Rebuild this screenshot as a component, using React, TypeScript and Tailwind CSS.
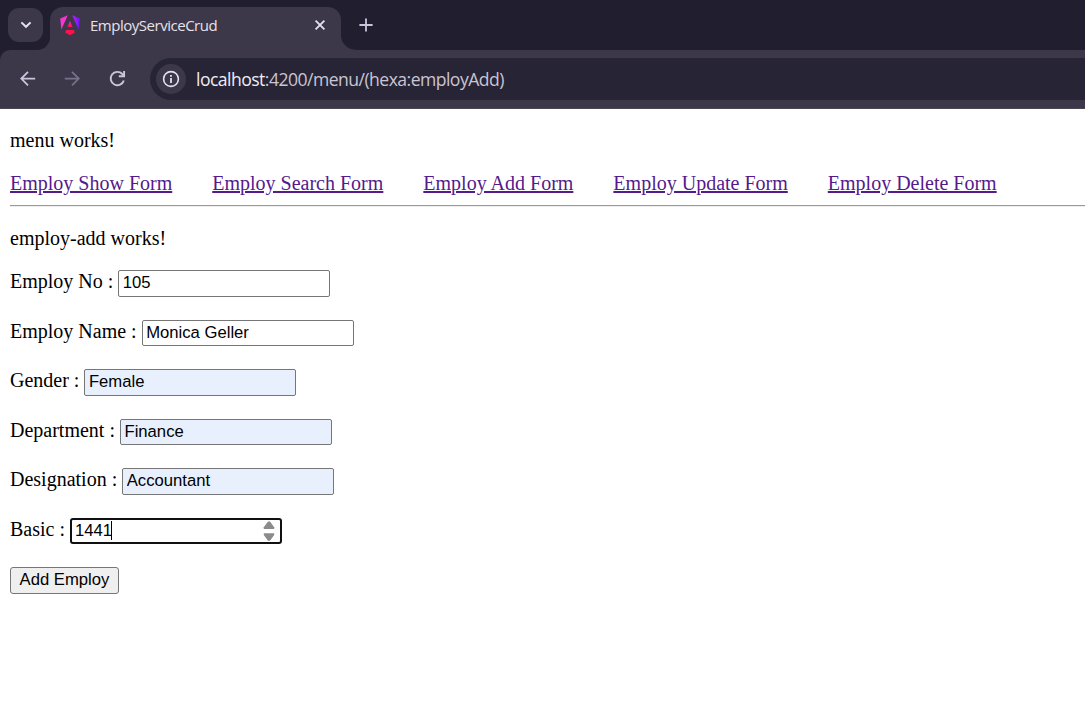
import React from "react";

const links = [
  "Employ Show Form",
  "Employ Search Form",
  "Employ Add Form",
  "Employ Update Form",
  "Employ Delete Form",
];

const fields = [
  { label: "Employ No :", value: "105", filled: false },
  { label: "Employ Name :", value: "Monica Geller", filled: false },
  { label: "Gender :", value: "Female", filled: true },
  { label: "Department :", value: "Finance", filled: true },
  { label: "Designation :", value: "Accountant", filled: true },
];

function AngularLogo() {
  return (
    <svg width="20" height="21" viewBox="0 0 20 21" className="block">
      <defs>
        <linearGradient id="ng" x1="0" y1="0.3" x2="1" y2="0.3">
          <stop offset="0" stopColor="#c023e8" />
          <stop offset="1" stopColor="#6a14ff" />
        </linearGradient>
        <linearGradient id="ngLow" x1="0" y1="0" x2="0" y2="1">
          <stop offset="0" stopColor="#f52cc0" />
          <stop offset="1" stopColor="#ff0f4c" />
        </linearGradient>
      </defs>
      <path d="M7.8 0.2 L0.2 3.5 L1.4 14.4 Z" fill="#f735cf" />
      <path d="M12.2 0.2 L19.8 3.5 L18.6 14.4 Z" fill="url(#ng)" />
      <path d="M10 6 L12.5 12 H7.5 Z" fill="url(#ngLow)" />
      <path d="M6.1 15.1 H13.9 L14.8 17.4 L10 20.3 L5.2 17.4 Z" fill="#ff104f" />
    </svg>
  );
}

function TabStrip() {
  return (
    <div className="flex h-[50px] bg-[#211e2f]">
      <div className="mt-2 ml-2 flex h-[34px] w-[35px] shrink-0 items-center justify-center rounded-[11px] bg-[#3c384a]">
        <svg width="12" height="8" viewBox="0 0 12 8" fill="none" stroke="#e6e1f0" strokeWidth="2">
          <path d="M1.4 1.4 L6 5.8 L10.6 1.4" />
        </svg>
      </div>
      <svg width="13" height="13" viewBox="0 0 13 13" className="-ml-[6px] shrink-0 self-end">
        <path d="M13 0 A13 13 0 0 1 0 13 H13 Z" fill="#3c384a" />
      </svg>
      <div className="mt-[7px] flex h-[43px] w-[290.5px] shrink-0 items-start rounded-t-[13px] bg-[#3c384a]">
        <div className="mt-[7.5px] ml-[10px]">
          <AngularLogo />
        </div>
        <span className="mt-[7px] ml-[10px] w-[127px] text-[15px] leading-[22px] tracking-[-0.48px] whitespace-nowrap text-[#e6e1e9]" style={{ fontFamily: '"Open Sans", sans-serif' }}>
          EmployServiceCrud
        </span>
        <svg width="12" height="12" viewBox="0 0 12 12" fill="none" stroke="#e6e1f0" strokeWidth="1.8" className="mt-[12px] ml-[97px]">
          <path d="M1.6 1.6 L10.4 10.4 M10.4 1.6 L1.6 10.4" />
        </svg>
      </div>
      <svg width="15" height="15" viewBox="0 0 15 15" className="shrink-0 self-end">
        <path d="M0 0 A15 15 0 0 0 15 15 H0 Z" fill="#3c384a" />
      </svg>
      <svg width="14" height="14" viewBox="0 0 14 14" fill="none" stroke="#cbc5dc" strokeWidth="1.8" className="mt-[18px] ml-[3.5px]">
        <path d="M7 0.4 V13.6 M0.4 7 H13.6" />
      </svg>
    </div>
  );
}

function Toolbar() {
  return (
    <div className="bg-[#211e2f]">
      <div className="flex h-[59px] items-start rounded-tl-[10px] border-b border-[#4b4850] bg-[#3c384a] pt-2">
        <svg width="16" height="16" viewBox="0 0 16 16" fill="none" stroke="#cbc5dc" strokeWidth="1.8" className="mt-[13px] ml-5 shrink-0">
          <path d="M15.2 7.6 H1.5 M8 0.8 L1.3 7.6 L8 14.4" />
        </svg>
        <svg width="16" height="16" viewBox="0 0 16 16" fill="none" stroke="#77728a" strokeWidth="1.8" className="mt-[13px] ml-[28px] shrink-0">
          <path d="M0.8 7.6 H14.5 M8 0.8 L14.7 7.6 L8 14.4" />
        </svg>
        <svg width="17" height="17" viewBox="0 0 17 17" fill="none" stroke="#cbc5dc" strokeWidth="1.9" className="mt-[12px] ml-[29px] shrink-0">
          <path d="M14.8 10.4 A6.7 6.7 0 1 1 13.3 4 L15 5.7" />
          <path d="M15.1 1 V6.3 H9.8" />
        </svg>
        <div className="ml-[24px] flex h-[42px] grow items-center rounded-l-[21px] bg-[#272436]">
          <div className="ml-[6px] flex size-[30px] items-center justify-center rounded-full bg-[#3c384a]">
            <svg width="18" height="18" viewBox="0 0 18 18" fill="none">
              <circle cx="9" cy="9" r="7.4" stroke="#e6e1f0" strokeWidth="1.6" />
              <path d="M9 8 V13" stroke="#e6e1f0" strokeWidth="1.8" />
              <path d="M9 4.9 V6.7" stroke="#e6e1f0" strokeWidth="1.8" />
            </svg>
          </div>
          <span className="ml-[10px] text-[17.6px] leading-[26px] tracking-[-0.54px] whitespace-nowrap text-[#c9c4d2]" style={{ fontFamily: '"Open Sans", sans-serif' }}>
            <span className="text-[#f0ecf5]">localhost</span>:4200/menu/(hexa:employAdd)
          </span>
        </div>
      </div>
    </div>
  );
}

export default function App() {
  return (
    <div className="flex h-[709px] w-[1085px] flex-col overflow-hidden bg-white">
      <TabStrip />
      <Toolbar />
      <main className="pl-[10px] text-[20px] leading-[23px] text-black" style={{ fontFamily: '"Liberation Serif", serif' }}>
        <p className="mt-5">menu works!</p>
        <nav className="mt-5 flex gap-[40px]">
          {links.map((link) => (
            <a key={link} href="#" className="whitespace-nowrap text-[#551a8b] underline">
              {link}
            </a>
          ))}
        </nav>
        <hr className="mt-[10px] h-[2px] border-t border-b border-t-[#9a9a9a] border-b-[#eeeeee]" />
        <p className="mt-5">employ-add works!</p>
        <form className="mt-5 flex flex-col gap-[23px]">
          {fields.map((field) => (
            <label key={field.label} className="flex h-[26.5px] gap-[5px]">
              <span className="whitespace-nowrap">{field.label}</span>
              <input
                readOnly
                value={field.value}
                className={
                  "h-[26.5px] w-[212px] rounded-[2px] border border-[#767676] pr-1 pb-[0.5px] pl-[3.5px] text-[16.67px] leading-[19px] " +
                  (field.filled ? "bg-[#e8f0fe]" : "bg-white")
                }
                style={{ fontFamily: '"Liberation Sans", sans-serif' }}
              />
            </label>
          ))}
          <div className="flex h-[26.5px] gap-[5px]">
            <span className="whitespace-nowrap">Basic :</span>
            <div
              className="flex h-[26.5px] w-[212px] rounded-[3px] border-2 border-[#101010] pr-[5.5px] pl-[3px] text-[16.67px] leading-[22px]"
              style={{ fontFamily: '"Liberation Sans", sans-serif' }}
            >
              <span className="w-[36px]">1441</span>
              <span className="mt-[1px] h-[19px] w-px bg-black" />
              <svg width="12" height="20" viewBox="0 0 12 20" fill="#8b8b8b" className="mt-[1px] ml-auto">
                <path d="M5 0.5 H7 L11.2 6.2 V8 H0.8 V6.2 Z" />
                <path d="M5 19.8 H7 L11.2 14 V12.2 H0.8 V14 Z" />
              </svg>
            </div>
          </div>
          <button
            type="button"
            className="h-[26.5px] w-[109px] rounded-[3px] border border-[#767676] bg-[#efefef] pb-[1px] text-[16.67px] leading-[19px] whitespace-nowrap"
            style={{ fontFamily: '"Liberation Sans", sans-serif' }}
          >
            Add Employ
          </button>
        </form>
      </main>
    </div>
  );
}
